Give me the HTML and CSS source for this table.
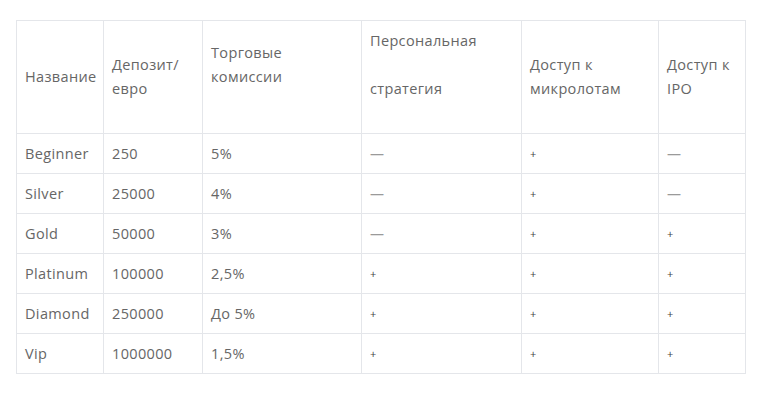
FILE: index.html
```html
<!DOCTYPE html>
<html lang="ru">
<head>
<meta charset="utf-8">
<link rel="stylesheet" href="styles.css">
</head>
<body>
<div class="wrap">
<table class="tbl">
  <colgroup>
    <col class="c1"><col class="c2"><col class="c3"><col class="c4"><col class="c5"><col class="c6">
  </colgroup>
  <thead>
    <tr class="head-row">
      <th>Название</th>
      <th>Депозит/<br>евро</th>
      <th><span class="trail">Торговые<br>комиссии</span></th>
      <th><span class="trail"><span class="gapline">Персональная</span>стратегия</span></th>
      <th>Доступ к<br>микролотам</th>
      <th>Доступ к<br>IPO</th>
    </tr>
  </thead>
  <tbody>
    <tr><td>Beginner</td><td>250</td><td>5%</td><td><span class="no">—</span></td><td><span class="yes">+</span></td><td><span class="no">—</span></td></tr>
    <tr><td>Silver</td><td>25000</td><td>4%</td><td><span class="no">—</span></td><td><span class="yes">+</span></td><td><span class="no">—</span></td></tr>
    <tr><td>Gold</td><td>50000</td><td>3%</td><td><span class="no">—</span></td><td><span class="yes">+</span></td><td><span class="yes">+</span></td></tr>
    <tr><td>Platinum</td><td>100000</td><td>2,5%</td><td><span class="yes">+</span></td><td><span class="yes">+</span></td><td><span class="yes">+</span></td></tr>
    <tr><td>Diamond</td><td>250000</td><td>До 5%</td><td><span class="yes">+</span></td><td><span class="yes">+</span></td><td><span class="yes">+</span></td></tr>
    <tr><td>Vip</td><td>1000000</td><td>1,5%</td><td><span class="yes">+</span></td><td><span class="yes">+</span></td><td><span class="yes">+</span></td></tr>
  </tbody>
</table>
</div>
</body>
</html>
```
FILE: styles.css
```css
html, body {
  margin: 0;
  padding: 0;
  background: #ffffff;
}
.wrap {
  padding: 20px 0 0 16px;
}
.tbl {
  border-collapse: collapse;
  table-layout: fixed;
  width: 729px;
  font-family: "Open Sans", "Noto Sans", sans-serif;
  font-size: 14.5px;
  letter-spacing: 0.35px;
  color: #666666;
}
.c1 { width: 87px; }
.c2 { width: 99px; }
.c3 { width: 159px; }
.c4 { width: 160px; }
.c5 { width: 137px; }
.c6 { width: 87px; }
.tbl th, .tbl td {
  border: 1px solid #e4e6ea;
  padding: 0 8px;
  text-align: left;
  font-weight: 400;
  line-height: 24px;
  vertical-align: middle;
}
.head-row {
  height: 113px;
}
tbody tr {
  height: 40px;
}
.trail {
  display: block;
  padding-bottom: 24px;
}
.gapline {
  display: block;
  margin-bottom: 24px;
}
.no {
  display: inline-block;
  color: #9a9a9a;
  font-size: 14px;
  letter-spacing: 0;
}
.yes {
  display: inline-block;
  color: #3f3f3f;
  font-size: 11px;
  font-weight: 400;
  letter-spacing: 0;
}
```
